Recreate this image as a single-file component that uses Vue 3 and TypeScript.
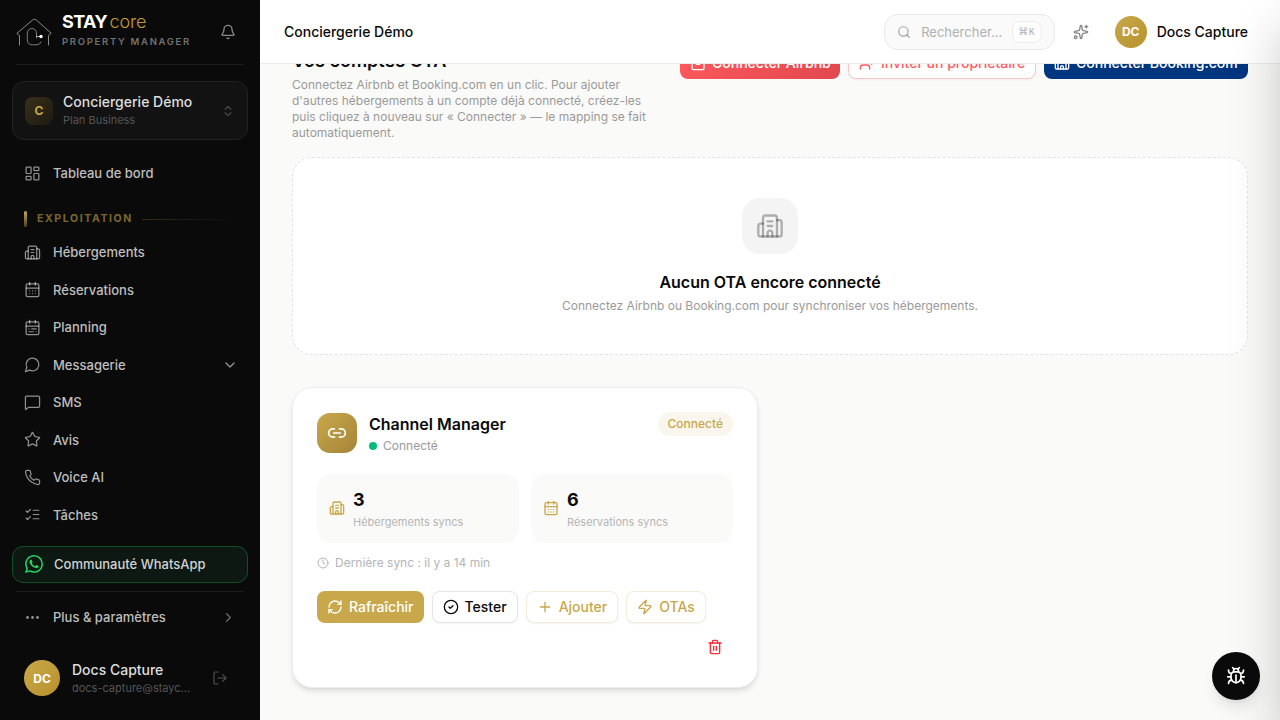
<script setup lang="ts">
import { h, type FunctionalComponent } from 'vue'

const glyphs: Record<string, string[]> = {
  dashboard: ['M4 3h5a1 1 0 0 1 1 1v7a1 1 0 0 1-1 1H4a1 1 0 0 1-1-1V4a1 1 0 0 1 1-1z', 'M15 3h5a1 1 0 0 1 1 1v3a1 1 0 0 1-1 1h-5a1 1 0 0 1-1-1V4a1 1 0 0 1 1-1z', 'M15 12h5a1 1 0 0 1 1 1v7a1 1 0 0 1-1 1h-5a1 1 0 0 1-1-1v-7a1 1 0 0 1 1-1z', 'M4 16h5a1 1 0 0 1 1 1v3a1 1 0 0 1-1 1H4a1 1 0 0 1-1-1v-3a1 1 0 0 1 1-1z'],
  building: ['M10 12h4', 'M10 8h4', 'M14 21v-3a2 2 0 0 0-4 0v3', 'M6 10H4a2 2 0 0 0-2 2v7a2 2 0 0 0 2 2h16a2 2 0 0 0 2-2V9a2 2 0 0 0-2-2h-2', 'M6 21V5a2 2 0 0 1 2-2h8a2 2 0 0 1 2 2v16'],
  bag: ['M6 2 3 6v14a2 2 0 0 0 2 2h14a2 2 0 0 0 2-2V6l-3-4z', 'M3 6h18', 'M16 10a4 4 0 0 1-8 0'],
  calendar: ['M8 2v4', 'M16 2v4', 'M5 4h14a2 2 0 0 1 2 2v14a2 2 0 0 1-2 2H5a2 2 0 0 1-2-2V6a2 2 0 0 1 2-2z', 'M3 10h18', 'M8 14h.01', 'M12 14h.01', 'M16 14h.01', 'M8 18h.01', 'M12 18h.01', 'M16 18h.01'],
  planning: ['M8 2v4', 'M16 2v4', 'M5 4h14a2 2 0 0 1 2 2v14a2 2 0 0 1-2 2H5a2 2 0 0 1-2-2V6a2 2 0 0 1 2-2z', 'M3 10h18', 'M17 14h-6', 'M13 18H7', 'M7 14h.01', 'M17 18h.01'],
  message: ['M7.9 20A9 9 0 1 0 4 16.1L2 22Z'],
  sms: ['M22 17a2 2 0 0 1-2 2H6.828a2 2 0 0 0-1.414.586l-2.202 2.202A.71.71 0 0 1 2 21.286V5a2 2 0 0 1 2-2h16a2 2 0 0 1 2 2z'],
  star: ['M11.525 2.295a.53.53 0 0 1 .95 0l2.31 4.679a2.123 2.123 0 0 0 1.595 1.16l5.166.756a.53.53 0 0 1 .294.904l-3.736 3.638a2.123 2.123 0 0 0-.611 1.878l.882 5.14a.53.53 0 0 1-.771.56l-4.618-2.428a2.122 2.122 0 0 0-1.973 0L6.396 21.01a.53.53 0 0 1-.77-.56l.881-5.139a2.122 2.122 0 0 0-.611-1.879L2.16 9.795a.53.53 0 0 1 .294-.906l5.165-.755a2.122 2.122 0 0 0 1.597-1.16z'],
  phone: ['M22 16.92v3a2 2 0 0 1-2.18 2 19.79 19.79 0 0 1-8.63-3.07 19.5 19.5 0 0 1-6-6 19.79 19.79 0 0 1-3.07-8.67A2 2 0 0 1 4.11 2h3a2 2 0 0 1 2 1.72 12.84 12.84 0 0 0 .7 2.81 2 2 0 0 1-.45 2.11L8.09 9.91a16 16 0 0 0 6 6l1.27-1.27a2 2 0 0 1 2.11-.45 12.84 12.84 0 0 0 2.81.7A2 2 0 0 1 22 16.92z'],
  tasks: ['m3 17 2 2 4-4', 'm3 7 2 2 4-4', 'M13 6h8', 'M13 12h8', 'M13 18h8'],
  bell: ['M10.268 21a2 2 0 0 0 3.464 0', 'M3.262 15.326A1 1 0 0 0 4 17h16a1 1 0 0 0 .74-1.673C19.41 13.956 18 12.499 18 8A6 6 0 0 0 6 8c0 4.499-1.411 5.956-2.738 7.326'],
  updown: ['m7 15 5 5 5-5', 'm7 9 5-5 5 5'],
  down: ['m6 9 6 6 6-6'],
  right: ['m9 18 6-6-6-6'],
  logout: ['m16 17 5-5-5-5', 'M21 12H9', 'M9 21H5a2 2 0 0 1-2-2V5a2 2 0 0 1 2-2h4'],
  search: ['m21 21-4.34-4.34', 'M19 11a8 8 0 1 1-16 0 8 8 0 0 1 16 0z'],
  sparkles: ['M11.017 2.814a1 1 0 0 1 1.966 0l1.051 5.558a2 2 0 0 0 1.594 1.594l5.558 1.051a1 1 0 0 1 0 1.966l-5.558 1.051a2 2 0 0 0-1.594 1.594l-1.051 5.558a1 1 0 0 1-1.966 0l-1.051-5.558a2 2 0 0 0-1.594-1.594l-5.558-1.051a1 1 0 0 1 0-1.966l5.558-1.051a2 2 0 0 0 1.594-1.594z', 'M20 2v4', 'M22 4h-4', 'M6 20a2 2 0 1 1-4 0 2 2 0 0 1 4 0z'],
  link: ['M9 17H7A5 5 0 0 1 7 7h2', 'M15 7h2a5 5 0 1 1 0 10h-2', 'M8 12h8'],
  clock: ['M22 12a10 10 0 1 1-20 0 10 10 0 0 1 20 0z', 'M12 6v6l4 2'],
  refresh: ['M3 12a9 9 0 0 1 9-9 9.75 9.75 0 0 1 6.74 2.74L21 8', 'M21 3v5h-5', 'M21 12a9 9 0 0 1-9 9 9.75 9.75 0 0 1-6.74-2.74L3 16', 'M8 16H3v5'],
  check: ['M22 12a10 10 0 1 1-20 0 10 10 0 0 1 20 0z', 'm9 12 2 2 4-4'],
  plus: ['M5 12h14', 'M12 5v14'],
  zap: ['M4 14a1 1 0 0 1-.78-1.63l9.9-10.2a.5.5 0 0 1 .86.46l-1.92 6.02A1 1 0 0 0 13 10h7a1 1 0 0 1 .78 1.63l-9.9 10.2a.5.5 0 0 1-.86-.46l1.92-6.02A1 1 0 0 0 11 14z'],
  trash: ['M10 11v6', 'M14 11v6', 'M19 6v14a2 2 0 0 1-2 2H7a2 2 0 0 1-2-2V6', 'M3 6h18', 'M8 6V4a2 2 0 0 1 2-2h4a2 2 0 0 1 2 2v2'],
  userPlus: ['M16 21v-2a4 4 0 0 0-4-4H6a4 4 0 0 0-4 4v2', 'M13 7a4 4 0 1 1-8 0 4 4 0 0 1 8 0z', 'M19 8v6', 'M22 11h-6'],
  bug: ['M12 20v-9', 'M14 7a4 4 0 0 1 4 4v3a6 6 0 0 1-12 0v-3a4 4 0 0 1 4-4z', 'M14.12 3.88 16 2', 'M21 21a4 4 0 0 0-3.81-4', 'M21 5a4 4 0 0 1-3.55 3.97', 'M22 13h-4', 'M3 21a4 4 0 0 1 3.81-4', 'M3 5a4 4 0 0 0 3.55 3.97', 'M6 13H2', 'm8 2 1.88 1.88', 'M9 7.13V6a3 3 0 1 1 6 0v1.13'],
}

const Icon: FunctionalComponent<{ name: string; size?: number; weight?: number }> = (props) =>
  h(
    'svg',
    {
      width: props.size ?? 16,
      height: props.size ?? 16,
      viewBox: '0 0 24 24',
      fill: 'none',
      stroke: 'currentColor',
      'stroke-width': props.weight ?? 2,
      'stroke-linecap': 'round',
      'stroke-linejoin': 'round',
      'aria-hidden': 'true',
    },
    (glyphs[props.name] ?? []).map((d) => h('path', { d })),
  )
Icon.props = ['name', 'size', 'weight']

interface NavItem {
  label: string
  icon: string
  expandable?: boolean
}

const nav: NavItem[] = [
  { label: 'Hébergements', icon: 'building' },
  { label: 'Réservations', icon: 'calendar' },
  { label: 'Planning', icon: 'planning' },
  { label: 'Messagerie', icon: 'message', expandable: true },
  { label: 'SMS', icon: 'sms' },
  { label: 'Avis', icon: 'star' },
  { label: 'Voice AI', icon: 'phone' },
  { label: 'Tâches', icon: 'tasks' },
]

const stats = [
  { value: 3, label: 'Hébergements syncs', icon: 'building' },
  { value: 6, label: 'Réservations syncs', icon: 'calendar' },
]

const actions = [
  { label: 'Rafraîchir', icon: 'refresh', kind: 'solid' },
  { label: 'Tester', icon: 'check', kind: 'plain' },
  { label: 'Ajouter', icon: 'plus', kind: 'gold' },
  { label: 'OTAs', icon: 'zap', kind: 'gold' },
]
</script>

<template>
  <div class="app">
    <aside class="sidebar">
      <div class="brand">
        <svg class="house" width="36" height="28" viewBox="0 0 36 28" fill="none" stroke-linecap="round" stroke-linejoin="round">
          <path d="M3.5 27V17.5L.8 15.5 16.5 2q1.9-1.5 3.8 0L35.2 15.2 32.5 17.5V27" stroke="#999" stroke-width=".9" />
          <path d="M20.5 20v-4.9a4.6 4.6 0 0 0-9.2 0v6.7q0 5 5 5h4.2q3.8 0 4.5-2.8" stroke="#8a8a8a" stroke-width=".9" />
          <path d="M20.5 18.5H25" stroke="#ccc" stroke-width=".8" />
          <circle cx="25" cy="18.5" r="1.7" fill="#fff" />
        </svg>
        <div class="brand-text">
          <div class="wordmark"><b>STAY</b><span>core</span></div>
          <div class="tagline">PROPERTY MANAGER</div>
        </div>
        <Icon class="bell" name="bell" />
      </div>

      <button class="org">
        <span class="org-badge">C</span>
        <span class="org-text"><strong>Conciergerie Démo</strong><small>Plan Business</small></span>
        <Icon class="org-arrows" name="updown" :size="14" />
      </button>

      <nav>
        <a class="item first"><Icon name="dashboard" :size="17" :weight="1.75" /><span>Tableau de bord</span></a>
        <div class="section"><i class="tick" /><span>EXPLOITATION</span><i class="rule" /></div>
        <a v-for="n in nav" :key="n.label" class="item">
          <Icon :name="n.icon" :size="17" :weight="1.75" /><span>{{ n.label }}</span>
          <Icon v-if="n.expandable" class="caret" name="down" />
        </a>
      </nav>

      <a class="community">
        <svg width="18" height="18" viewBox="0 0 24 24" fill="#25d366" aria-hidden="true">
          <path d="M17.472 14.382c-.297-.149-1.758-.867-2.03-.967-.273-.099-.471-.148-.67.15-.197.297-.767.966-.94 1.164-.173.199-.347.223-.644.075-.297-.15-1.255-.463-2.39-1.475-.883-.788-1.48-1.761-1.653-2.059-.173-.297-.018-.458.13-.606.134-.133.298-.347.446-.52.149-.174.198-.298.298-.497.099-.198.05-.371-.025-.52-.075-.149-.669-1.612-.916-2.207-.242-.579-.487-.5-.669-.51-.173-.008-.371-.01-.57-.01-.198 0-.52.074-.792.372-.272.297-1.04 1.016-1.04 2.479 0 1.462 1.065 2.875 1.213 3.074.149.198 2.096 3.2 5.077 4.487.709.306 1.262.489 1.694.625.712.227 1.36.195 1.871.118.571-.085 1.758-.719 2.006-1.413.248-.694.248-1.289.173-1.413-.074-.124-.272-.198-.57-.347m-5.421 7.403h-.004a9.87 9.87 0 01-5.031-1.378l-.361-.214-3.741.982.998-3.648-.235-.374a9.86 9.86 0 01-1.51-5.26c.001-5.45 4.436-9.884 9.888-9.884 2.64 0 5.122 1.03 6.988 2.898a9.825 9.825 0 012.893 6.994c-.003 5.45-4.437 9.884-9.885 9.884m8.413-18.297A11.815 11.815 0 0012.05 0C5.495 0 .16 5.335.157 11.892c0 2.096.547 4.142 1.588 5.945L.057 24l6.305-1.654a11.882 11.882 0 005.683 1.448h.005c6.554 0 11.89-5.335 11.893-11.893a11.821 11.821 0 00-3.48-8.413z" />
        </svg>
        <span>Communauté WhatsApp</span>
      </a>
      <div class="divider" />
      <a class="item more">
        <svg width="17" height="17" viewBox="0 0 17 17" fill="currentColor"><circle cx="3.5" cy="8.5" r="1.4" /><circle cx="8.5" cy="8.5" r="1.4" /><circle cx="13.5" cy="8.5" r="1.4" /></svg>
        <span>Plus &amp; paramètres</span><Icon class="caret dim" name="right" :size="15" />
      </a>
      <div class="user">
        <span class="avatar large">DC</span>
        <span class="user-text"><strong>Docs Capture</strong><small>docs-capture@stayc...</small></span>
        <Icon name="logout" :weight="1.75" />
      </div>
    </aside>

    <div class="main">
      <header class="topbar">
        <h1>Conciergerie Démo</h1>
        <div class="search"><Icon name="search" :size="14" /><span>Rechercher...</span><kbd>⌘K</kbd></div>
        <Icon class="spark" name="sparkles" />
        <span class="avatar">DC</span>
        <span class="account">Docs Capture</span>
      </header>

      <main class="content">
        <section class="intro">
          <div class="intro-text">
            <h2>Vos comptes OTA</h2>
            <p>Connectez Airbnb et Booking.com en un clic. Pour ajouter d'autres hébergements à un compte déjà connecté, créez-les puis cliquez à nouveau sur « Connecter » — le mapping se fait automatiquement.</p>
          </div>
          <button class="btn airbnb"><Icon name="bag" /><span>Connecter Airbnb</span></button>
          <button class="btn invite"><Icon name="userPlus" /><span>Inviter un propriétaire</span></button>
          <button class="btn booking"><Icon name="building" /><span>Connecter Booking.com</span></button>
        </section>

        <section class="empty">
          <div class="empty-icon"><Icon name="building" :size="28" /></div>
          <h3>Aucun OTA encore connecté</h3>
          <p>Connectez Airbnb ou Booking.com pour synchroniser vos hébergements.</p>
        </section>

        <section class="grid">
          <article class="card">
            <div class="card-head">
              <span class="card-icon"><Icon name="link" :size="20" /></span>
              <div class="card-title">
                <h3>Channel Manager</h3>
                <p><i />Connecté</p>
              </div>
              <span class="badge">Connecté</span>
            </div>
            <div class="stats">
              <div v-for="s in stats" :key="s.label" class="stat">
                <Icon :name="s.icon" />
                <div><b>{{ s.value }}</b><small>{{ s.label }}</small></div>
              </div>
            </div>
            <p class="sync"><Icon name="clock" :size="12" /><span>Dernière sync : il y a 14 min</span></p>
            <div class="actions">
              <button v-for="a in actions" :key="a.label" class="btn" :class="a.kind"><Icon :name="a.icon" /><span>{{ a.label }}</span></button>
            </div>
            <button class="trash" aria-label="Supprimer"><Icon name="trash" /></button>
          </article>
        </section>
      </main>
    </div>

    <div class="drawer" />
    <button class="bug" aria-label="Signaler un bug"><Icon name="bug" :size="20" /></button>
  </div>
</template>

<style>
body {
  overflow: hidden;
}
</style>

<style scoped>
* {
  box-sizing: border-box;
}
.app {
  position: relative;
  display: flex;
  width: 1280px;
  height: 720px;
  overflow: hidden;
  background: #fafaf8;
  color: #0a0a0a;
  font-family: Inter, "Noto Sans", sans-serif;
  font-size: 14px;
  -webkit-font-smoothing: antialiased;
}
h1, h2, h3, p {
  margin: 0;
}
button {
  font-family: inherit;
  padding: 0;
  border: 0;
  background: none;
}
svg {
  flex: none;
}

.sidebar {
  width: 260px;
  height: 720px;
  flex: none;
  display: flex;
  flex-direction: column;
  background: #0a0a0a;
  color: #bebebe;
}
.brand {
  height: 65px;
  margin: 0 16px;
  display: flex;
  border-bottom: 1px solid #1d1d1d;
}
.house {
  margin-top: 18px;
}
.brand-text {
  margin-left: 10px;
  padding-top: 11px;
}
.wordmark {
  display: flex;
  gap: 2.5px;
  height: 22px;
  line-height: 22px;
  font-size: 18px;
  color: #fff;
}
.wordmark b {
  letter-spacing: -0.6px;
}
.wordmark span {
  color: #c09d36;
  font-weight: 300;
  letter-spacing: -0.1px;
}
.tagline {
  margin-top: 3px;
  font-size: 9.5px;
  line-height: 12px;
  font-weight: 600;
  letter-spacing: 1.7px;
  color: #727272;
  white-space: nowrap;
}
.bell {
  margin: 24px 8px 0 auto;
  color: #8a8a8a;
}
.org {
  margin: 16px 12px 0;
  height: 59px;
  padding: 0 12px;
  display: flex;
  align-items: center;
  border: 1px solid #222;
  border-radius: 12px;
  background: #121212;
  text-align: left;
}
.org-badge {
  width: 28px;
  height: 28px;
  border-radius: 8px;
  display: grid;
  place-items: center;
  background: linear-gradient(135deg, #3a301a, #1d1a12);
  color: #c8a84b;
  font-size: 12px;
  font-weight: 700;
}
.org-text,
.user-text {
  display: flex;
  flex-direction: column;
}
.org-text {
  margin-left: 10px;
  padding-bottom: 1px;
}
.org-text strong,
.user-text strong {
  font-size: 14px;
  line-height: 20px;
  font-weight: 500;
  color: #dedede;
}
.org-text small,
.user-text small {
  font-size: 11px;
  line-height: 16px;
  color: #555;
}
.org-arrows {
  margin-left: auto;
  color: #4a4a4a;
}
nav {
  margin-top: 14.5px;
}
.item {
  height: 37.5px;
  padding: 0 22px 0 24px;
  display: flex;
  align-items: center;
  gap: 12px;
  font-size: 13px;
  font-weight: 500;
  color: #bebebe;
}
.item > svg {
  color: rgba(255, 255, 255, 0.55);
}
.item .caret {
  margin-left: auto;
}
.item .dim {
  margin-right: 2px;
  color: rgba(255, 255, 255, 0.4);
}
.section {
  height: 16px;
  margin: 18.5px 28px 7px 24px;
  display: flex;
  align-items: center;
  color: #7b672f;
  font-size: 10.5px;
  font-weight: 700;
  letter-spacing: 1.6px;
}
.tick {
  width: 3px;
  height: 16px;
  margin-right: 10px;
  border-radius: 2px;
  background: linear-gradient(#c8a84b, #4c4020);
}
.rule {
  flex: 1;
  height: 1px;
  margin: 2px 0 0 9px;
  background: linear-gradient(90deg, #352d18, #0a0a0a);
}
.community {
  margin: 12.5px 12px 0;
  height: 37px;
  padding: 0 12px 1px;
  display: flex;
  align-items: center;
  gap: 11px;
  border: 1px solid #124f29;
  border-radius: 11px;
  background: #0c1811;
  color: #d2d2d2;
  font-size: 13px;
  font-weight: 500;
}
.divider {
  height: 1px;
  margin: 8px 16px 0;
  background: #1d1d1d;
}
.more {
  margin-top: 6.5px;
}
.user {
  margin-top: auto;
  height: 84px;
  padding: 0 32px 0 24px;
  display: flex;
  align-items: center;
  color: #505050;
}
.user-text {
  margin-left: 12px;
  width: 140px;
}
.avatar {
  width: 32px;
  height: 32px;
  flex: none;
  border-radius: 50%;
  display: grid;
  place-items: center;
  background: linear-gradient(135deg, #c8a84b, #b8922b);
  color: #fff;
  font-size: 12px;
  font-weight: 700;
}
.avatar.large {
  width: 36px;
  height: 36px;
}

.main {
  flex: 1;
  min-width: 0;
  height: 720px;
}
.topbar {
  position: relative;
  z-index: 2;
  height: 64px;
  padding: 0 32px 0 24px;
  display: flex;
  align-items: center;
  border-bottom: 1px solid #ececec;
  background: #fff;
}
.topbar h1,
.account {
  font-size: 14px;
  font-weight: 500;
  line-height: 20px;
}
.search {
  margin-left: auto;
  width: 171px;
  height: 36px;
  padding: 0 12px;
  display: flex;
  align-items: center;
  border: 1px solid #e9e9e9;
  border-radius: 14px;
  background: #fafafa;
  color: #b0b0b0;
  font-size: 13px;
}
.search svg {
  color: #a0a0a0;
}
.search span {
  margin-left: 10.5px;
}
.search kbd {
  width: 30px;
  height: 22px;
  margin-left: auto;
  display: grid;
  place-items: center;
  border: 1px solid #ececec;
  border-radius: 8px;
  background: #fff;
  color: #b0b0b0;
  font: 10px "Liberation Mono", "DejaVu Sans", monospace;
  letter-spacing: 0.5px;
}
.spark {
  margin: 0 26px 0 18px;
  color: #858585;
}
.account {
  margin-left: 10px;
}

.content {
  margin-top: -17px;
  padding: 0 32px;
}
.intro {
  display: flex;
  align-items: flex-start;
  gap: 8px;
}
.intro .btn {
  padding-bottom: 1px;
}
.intro-text {
  width: 372px;
  margin-right: 8px;
}
.intro h2 {
  font-size: 18px;
  line-height: 28px;
  font-weight: 600;
}
.intro p {
  margin-top: 2px;
}
.intro p,
.empty p {
  font-size: 12px;
  line-height: 16px;
  color: #9a9a9a;
}
.btn {
  height: 32px;
  flex: none;
  padding: 0 10px;
  display: flex;
  align-items: center;
  gap: 6px;
  border-radius: 8px;
  font-size: 14px;
  font-weight: 500;
  white-space: nowrap;
}
.airbnb {
  width: 160px;
  background: linear-gradient(135deg, #ff5a5f, #e0484d);
  color: #fff;
}
.invite {
  width: 188px;
  border: 1px solid #ffc4c6;
  background: #fff;
  color: #ff5a5f;
  box-shadow: 0 1px 2px rgba(0, 0, 0, 0.05);
}
.booking {
  width: 204px;
  background: #003580;
  color: #fff;
}
.empty {
  height: 198px;
  margin-top: 16px;
  padding-top: 40px;
  display: flex;
  flex-direction: column;
  align-items: center;
  border: 1px dashed #e3e3e3;
  border-radius: 20px;
  background: #fff;
}
.empty-icon {
  width: 56px;
  height: 56px;
  display: grid;
  place-items: center;
  border-radius: 18px;
  background: #f4f4f4;
  color: rgba(10, 10, 10, 0.3);
}
.empty h3,
.card h3 {
  font-size: 16px;
  line-height: 24px;
  font-weight: 600;
}
.empty h3 {
  margin: 16px 0 4px;
}
.grid {
  margin-top: 32px;
  display: grid;
  grid-template-columns: 1fr 1fr;
  gap: 24px;
}
.card {
  height: 300.5px;
  padding: 24px;
  display: flex;
  flex-direction: column;
  border: 1px solid #ededed;
  border-radius: 20px;
  background: #fff;
  box-shadow: 0 4px 6px -1px rgba(0, 0, 0, 0.1), 0 2px 4px -2px rgba(0, 0, 0, 0.1);
}
.card-head {
  height: 42px;
  display: flex;
  align-items: flex-start;
}
.card-icon {
  width: 40px;
  height: 40px;
  margin: 1px 12px 0 0;
  display: grid;
  place-items: center;
  border-radius: 13px;
  background: linear-gradient(135deg, #c8a84b, #a58438);
  color: #fff;
}
.card-title p {
  display: flex;
  align-items: center;
  gap: 6px;
  margin-top: 2px;
  font-size: 12px;
  line-height: 16px;
  color: #9a9a9a;
}
.card-title i {
  width: 8px;
  height: 8px;
  border-radius: 50%;
  background: #00bc7d;
}
.badge {
  height: 24px;
  margin-left: auto;
  padding: 0 10px;
  border-radius: 12px;
  background: #faf6ed;
  color: #c8a84b;
  font-size: 12px;
  line-height: 24px;
  font-weight: 500;
}
.stats {
  margin-top: 20px;
  display: grid;
  grid-template-columns: 1fr 1fr;
  gap: 12px;
}
.stat {
  height: 68.5px;
  padding: 0 12px;
  display: flex;
  align-items: center;
  gap: 8px;
  border-radius: 14px;
  background: #fafaf9;
  color: #c8a84b;
}
.stat div {
  display: flex;
  flex-direction: column;
}
.stat b {
  font-size: 18px;
  line-height: 28px;
  color: #0a0a0a;
}
.stat small {
  font-size: 11px;
  line-height: 16.5px;
  color: #b5b5b5;
}
.sync {
  margin-top: 12px;
  display: flex;
  align-items: center;
  gap: 6px;
  font-size: 12px;
  line-height: 16px;
  color: #b5b5b5;
}
.actions {
  margin-top: 20px;
  display: flex;
  gap: 8px;
}
.solid {
  background: #c8a84b;
  color: #fff;
}
.plain,
.gold {
  border: 1px solid #e5e5e5;
  background: #fff;
  color: #0a0a0a;
  box-shadow: 0 1px 2px rgba(0, 0, 0, 0.05);
}
.gold {
  border-color: #f4ecd6;
  color: #c8a84b;
}
.trash {
  width: 36px;
  height: 32px;
  margin: 8px 0 0 auto;
  display: grid;
  place-items: center;
  color: #fb2c36;
}
.drawer {
  position: absolute;
  z-index: 3;
  left: 1280px;
  top: 0;
  width: 400px;
  height: 720px;
  box-shadow: 0 25px 50px -5px rgba(0, 0, 0, 0.25);
}
.bug {
  position: absolute;
  z-index: 4;
  left: 1212px;
  top: 652px;
  width: 48px;
  height: 48px;
  display: grid;
  place-items: center;
  border-radius: 50%;
  background: #0a0a0a;
  color: #fff;
  box-shadow: 0 10px 15px -3px rgba(0, 0, 0, 0.1), 0 4px 6px -4px rgba(0, 0, 0, 0.1);
}
</style>
